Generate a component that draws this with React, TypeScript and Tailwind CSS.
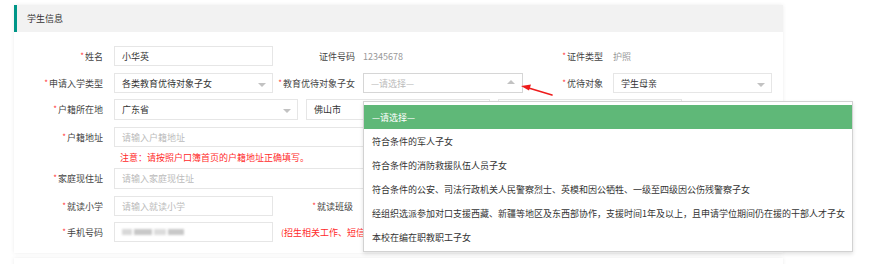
import React from "react";

const Label = ({ text, req = true, w }: { text: string; req?: boolean; w: string }) => (
  <div className={`${w} shrink-0 text-right text-[#444] pr-0`}>
    {req && <span className="text-[#ff3333] mr-[1px] text-[8px] align-top">*</span>}
    {text}
  </div>
);

const Down = () => (
  <span className="absolute right-[6px] top-[9px] w-0 h-0 border-l-[4px] border-r-[4px] border-t-[4px] border-l-transparent border-r-transparent border-t-[#c2c2c2]" />
);

const Box = ({ w, children, sel, up, ph, h = "h-[20px]" }: { w: string; children?: React.ReactNode; sel?: boolean; up?: boolean; ph?: boolean; h?: string }) => (
  <div className={`${w} ${h} shrink-0 relative border ${up ? "border-[#d6d6d6]" : "border-[#e6e6e6]"} bg-white flex items-center pl-[7px] ${ph ? "text-[#bbb]" : "text-[#333]"}`}>
    {children}
    {sel && !up && <Down />}
    {up && (
      <span className="absolute right-[7px] top-[6px] w-0 h-0 border-l-[4px] border-r-[4px] border-b-[4px] border-l-transparent border-r-transparent border-b-[#c2c2c2]" />
    )}
  </div>
);

export default function App() {
  const opts = [
    "符合条件的军人子女",
    "符合条件的消防救援队伍人员子女",
    "符合条件的公安、司法行政机关人民警察烈士、英模和因公牺牲、一级至四级因公伤残警察子女",
    "经组织选派参加对口支援西藏、新疆等地区及东西部协作，支援时间1年及以上，且申请学位期间仍在援的干部人才子女",
    "本校在编在职教职工子女",
  ];
  return (
    <div
      className="relative w-[885px] h-[264px] bg-white overflow-hidden text-[9px] leading-none"
      style={{ fontFamily: '"Noto Sans CJK SC", "Noto Sans", sans-serif' }}
    >
      <div className="ml-[14px] mt-[5px] w-[769px] bg-white shadow-[0_0_4px_rgba(0,0,0,0.08)] pb-[11px]">
        <div className="h-[27px] bg-[#f2f2f2] border-l-[3px] border-[#009688] flex items-center pl-[10px] text-[#333]">
          学生信息
        </div>
        {/* row 1 */}
        <div className="mt-[14px] h-[20px] flex items-center">
          <Label text="姓名" w="w-[89px]" />
          <div className="w-[11px]" />
          <Box w="w-[159px]">小华英</Box>
          <Label text="证件号码" req={false} w="w-[82px]" />
          <div className="w-[8px]" />
          <div className="w-[160px] text-[#999] pl-[0px]">12345678</div>
          <Label text="证件类型" w="w-[80px]" />
          <div className="w-[10px]" />
          <div className="text-[#999]">护照</div>
        </div>
        {/* row 2 */}
        <div className="mt-[7px] h-[20px] flex items-center">
          <Label text="申请入学类型" w="w-[89px]" />
          <div className="w-[11px]" />
          <Box w="w-[159px]" sel>各类教育优待对象子女</Box>
          <Label text="教育优待对象子女" w="w-[82px]" />
          <div className="w-[8px]" />
          <Box w="w-[160px]" up ph>—请选择—</Box>
          <Label text="优待对象" w="w-[80px]" />
          <div className="w-[10px]" />
          <Box w="w-[159px]" sel>学生母亲</Box>
        </div>
        {/* row 3 */}
        <div className="mt-[6px] h-[21px] flex items-center">
          <Label text="户籍所在地" w="w-[89px]" />
          <div className="w-[11px]" />
          <Box w="w-[184px]" h="h-[21px]" sel>广东省</Box>
          <div className="w-[8px]" />
          <Box w="w-[184px]" h="h-[21px]" sel>佛山市</Box>
          <div className="w-[8px]" />
          <Box w="w-[184px]" h="h-[21px]" sel> </Box>
        </div>
        {/* row 4 */}
        <div className="mt-[7px] h-[20px] flex items-center">
          <Label text="户籍地址" w="w-[89px]" />
          <div className="w-[11px]" />
          <Box w="w-[658px]" ph>请输入户籍地址</Box>
        </div>
        <div className="h-[21px] flex items-center pl-[106px] text-[#ff2a2a]">
          注意：请按照户口簿首页的户籍地址正确填写。
        </div>
        {/* row 5 */}
        <div className="h-[21px] flex items-center">
          <Label text="家庭现住址" w="w-[89px]" />
          <div className="w-[11px]" />
          <Box w="w-[658px]" h="h-[21px]" ph>请输入家庭现住址</Box>
        </div>
        {/* row 6 */}
        <div className="mt-[7px] h-[20px] flex items-center">
          <Label text="就读小学" w="w-[89px]" />
          <div className="w-[11px]" />
          <Box w="w-[159px]" ph>请输入就读小学</Box>
          <Label text="就读班级" w="w-[80px]" />
        </div>
        {/* row 7 */}
        <div className="mt-[6px] h-[20px] flex items-center">
          <Label text="手机号码" w="w-[89px]" />
          <div className="w-[11px]" />
          <Box w="w-[159px]">
            <div className="flex items-center gap-[2px] blur-[1px]">
              <span className="w-[10px] h-[6px] bg-[#d8d8d8]" />
              <span className="w-[18px] h-[6px] bg-[#c8c8c8]" />
              <span className="w-[12px] h-[6px] bg-[#dcdcdc]" />
              <span className="w-[16px] h-[6px] bg-[#c8c8c8]" />
            </div>
          </Box>
          <div className="ml-[8px] w-[82px] overflow-hidden whitespace-nowrap text-[#ff2a2a]">(招生相关工作、短信</div>
        </div>
      </div>
      <div className="ml-[14px] mt-[5px] w-[769px] h-[20px] bg-white shadow-[0_0_4px_rgba(0,0,0,0.08)]" />

      {/* dropdown */}
      <div className="absolute left-[363px] top-[101px] w-[490px] bg-white border border-[#d2d2d2] shadow-[0_2px_4px_rgba(0,0,0,0.12)] pt-[3px] pb-[2px]">
        <div className="h-[24px] flex items-center pl-[8px] bg-[#5fb878] text-white">—请选择—</div>
        {opts.map((o) => (
          <div key={o} className="h-[24px] flex items-center pl-[8px] text-[#333] whitespace-nowrap">
            {o}
          </div>
        ))}
      </div>

      {/* red arrow */}
      <svg className="absolute left-[515px] top-[78px]" width="45" height="22" viewBox="0 0 45 22">
        <line x1="37" y1="17" x2="12" y2="9.5" stroke="#ee1c1c" strokeWidth="1.6" strokeLinecap="round" />
        <polygon points="6,8 16,6.5 14,12.5" fill="#ee1c1c" />
      </svg>
    </div>
  );
}
